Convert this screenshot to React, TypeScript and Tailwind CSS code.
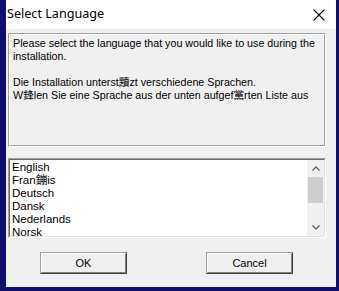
import React from "react";

const items = ["English", "Fran鏰is", "Deutsch", "Dansk", "Nederlands", "Norsk"];

export default function App() {
  const body = { fontFamily: '"Liberation Sans", "Noto Sans CJK SC", Arial, sans-serif' };
  return (
    <div className="w-[339px] h-[291px] bg-[#10106c] overflow-hidden flex">
      <div className="ml-[6px] w-[330px] h-[287px] bg-[#f0f0f0] flex flex-col">
        <div className="h-[29px] bg-white flex items-center justify-between shrink-0">
          <span
            className="pl-[1px] text-[12.6px] text-black leading-none"
            style={{ fontFamily: '"Noto Sans", "Open Sans", sans-serif' }}
          >
            Select Language
          </span>
          <svg width="12" height="12" viewBox="0 0 12 12" className="mr-[11px]">
            <path d="M0.5 0.5 L11.5 11.5 M11.5 0.5 L0.5 11.5" stroke="#111" strokeWidth="1.1" />
          </svg>
        </div>
        <div
          className="ml-[2px] mt-[4px] w-[318px] h-[114px] border border-t-[#a0a0a0] border-l-[#a0a0a0] border-r-white border-b-white shrink-0"
        >
          <div
            className="h-full w-full border border-t-white border-l-white border-r-[#a0a0a0] border-b-[#a0a0a0] pl-[3px] pt-[2px] text-[10.7px] leading-[13px] text-black"
            style={body}
          >
            <div>Please select the language that you would like to use during the</div>
            <div>installation.</div>
            <div className="h-[13px]" />
            <div>Die Installation unterst黷zt verschiedene Sprachen.</div>
            <div>W鋒len Sie eine Sprache aus der unten aufgef黨rten Liste aus</div>
          </div>
        </div>
        <div className="ml-[2px] mt-[11px] w-[318px] h-[80px] border border-t-[#a0a0a0] border-l-[#a0a0a0] border-r-white border-b-white shrink-0">
          <div className="h-full w-full border border-t-[#696969] border-l-[#696969] border-r-[#e3e3e3] border-b-[#e3e3e3] bg-white flex overflow-hidden">
            <div className="flex-1 pl-[2px] pt-[1px] text-[11.5px] leading-[13px] text-black" style={body}>
              {items.map((t) => (
                <div key={t}>{t}</div>
              ))}
            </div>
            <div className="w-[17px] h-full bg-[#f0f0f0] flex flex-col items-center">
              <div className="h-[17px] w-full flex items-center justify-center">
                <svg width="8" height="5" viewBox="0 0 8 5">
                  <path d="M0.5 4.5 L4 1 L7.5 4.5" stroke="#606060" strokeWidth="1.3" fill="none" />
                </svg>
              </div>
              <div className="w-[15px] h-[26px] bg-[#cdcdcd]" />
              <div className="flex-1" />
              <div className="h-[17px] w-full flex items-center justify-center">
                <svg width="8" height="5" viewBox="0 0 8 5">
                  <path d="M0.5 0.5 L4 4 L7.5 0.5" stroke="#606060" strokeWidth="1.3" fill="none" />
                </svg>
              </div>
            </div>
          </div>
        </div>
        <div className="flex mt-[14px] shrink-0">
          <button
            className="ml-[34px] w-[87px] h-[22px] bg-[#f0f0f0] border border-t-[#a0a0a0] border-l-[#a0a0a0] border-r-[#404040] border-b-[#404040] text-[11px] text-black flex items-center justify-center"
            style={body}
          >
            <span className="w-full h-full flex items-center justify-center border border-t-white border-l-white border-r-[#808080] border-b-[#808080]">OK</span>
          </button>
          <button
            className="ml-[79px] w-[87px] h-[22px] bg-[#f0f0f0] border border-t-[#a0a0a0] border-l-[#a0a0a0] border-r-[#404040] border-b-[#404040] text-[11px] text-black flex items-center justify-center"
            style={body}
          >
            <span className="w-full h-full flex items-center justify-center border border-t-white border-l-white border-r-[#808080] border-b-[#808080]">Cancel</span>
          </button>
        </div>
      </div>
    </div>
  );
}
